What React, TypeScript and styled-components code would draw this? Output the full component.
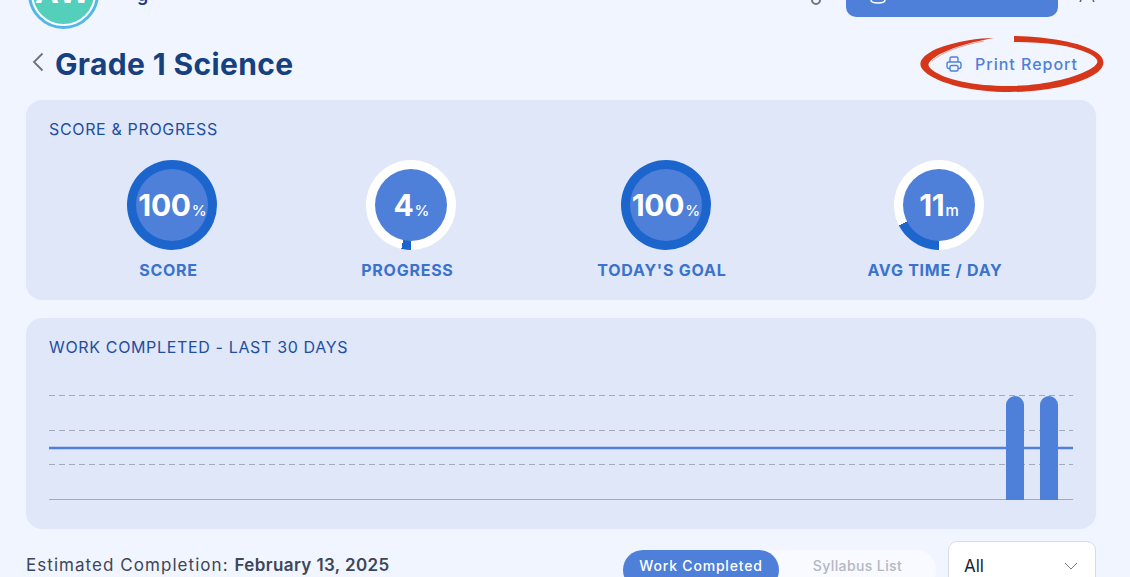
import React from 'react';
import styled, { createGlobalStyle } from 'styled-components';

const GlobalStyle = createGlobalStyle`
  html, body {
    margin: 0;
    padding: 0;
    height: 577px;
    overflow: hidden;
    background: #f1f5ff;
  }
  * {
    box-sizing: border-box;
  }
`;

const Page = styled.div`
  width: 1130px;
  height: 577px;
  overflow: hidden;
  padding: 0 34px 0 26px;
  background: #f1f5ff;
  font-family: Inter, "Open Sans", sans-serif;
`;

const TopBar = styled.div`
  height: 29px;
  display: flex;
  align-items: flex-end;
  overflow: hidden;
`;

const Avatar = styled.div`
  width: 71px;
  height: 71px;
  flex: none;
  margin-left: 2px;
  border-radius: 50%;
  border: 3px solid #53b6ea;
  padding: 2px;
  background: #fff;
`;

const AvatarFace = styled.div`
  width: 100%;
  height: 100%;
  padding-top: 12px;
  border-radius: 50%;
  background: #54cfbc;
  color: #fff;
  font-size: 32px;
  line-height: 34px;
  font-weight: 700;
  letter-spacing: 1px;
  text-align: center;
`;

const UserName = styled.span`
  align-self: flex-start;
  margin: -16px 0 0 38px;
  font-size: 18px;
  font-weight: 600;
  color: #17407f;
`;

const TopActions = styled.div`
  margin-left: auto;
  height: 17px;
  align-self: flex-start;
  display: flex;
  align-items: flex-start;
`;

const TopIcon = styled.svg`
  display: block;
  flex: none;
`;

const TopButton = styled.div`
  width: 212px;
  height: 17px;
  margin: 0 20px 0 24px;
  padding-left: 24px;
  background: #4f80d9;
  border-radius: 0 0 10px 10px;
`;

const TitleRow = styled.div`
  height: 71px;
  display: flex;
  align-items: center;
  justify-content: space-between;
  padding-bottom: 1px;
`;

const TitleGroup = styled.div`
  display: flex;
  align-items: center;
  gap: 11px;
`;

const BackIcon = styled.svg`
  display: block;
  margin: -4px 0 0 6px;
`;

const Title = styled.h1`
  margin: 0;
  font-size: 30px;
  font-weight: 700;
  letter-spacing: 0.35px;
  color: #17407f;
`;

const PrintWrap = styled.div`
  position: relative;
  display: flex;
  align-items: center;
  gap: 13px;
  margin-right: 18px;
  font-size: 16px;
  font-weight: 500;
  letter-spacing: 1px;
  color: #4f80d9;
`;

const RedCircle = styled.svg`
  position: absolute;
  left: -28px;
  top: -22px;
  pointer-events: none;
`;

const Card = styled.section<{ $height: number }>`
  height: ${props => props.$height}px;
  padding: 19px 23px 0;
  background: #dfe7f9;
  border-radius: 16px;
`;

const CardTitle = styled.h2`
  margin: 0;
  font-size: 16px;
  line-height: 20px;
  font-weight: 400;
  letter-spacing: 0.65px;
  color: #1f4e9e;
`;

const StatRow = styled.div`
  display: flex;
  justify-content: space-around;
  margin-top: 21px;
`;

const Stat = styled.div`
  display: flex;
  flex-direction: column;
  align-items: center;
`;

const Ring = styled.div<{ $percent: number }>`
  width: 90px;
  height: 90px;
  margin-left: 8px;
  padding: 9px;
  border-radius: 50%;
  background: conic-gradient(from 180deg, #1c65cd ${props => props.$percent}%, #fff 0);
`;

const RingCenter = styled.div`
  width: 100%;
  height: 100%;
  display: flex;
  align-items: baseline;
  justify-content: center;
  padding-top: 18px;
  border-radius: 50%;
  background: #4f80d9;
  color: #fff;
`;

const RingValue = styled.span`
  font-size: 30px;
  line-height: 36px;
  font-weight: 700;
  letter-spacing: -0.3px;
`;

const RingUnit = styled.span`
  margin-left: 1px;
  font-size: 15px;
  font-weight: 500;
`;

const StatLabel = styled.div`
  margin-top: 10px;
  font-size: 16px;
  line-height: 20px;
  font-weight: 700;
  letter-spacing: 0.75px;
  white-space: nowrap;
  color: #3a72cc;
`;

const ChartSvg = styled.svg`
  display: block;
  margin-top: 23px;
`;

const Spacer = styled.div`
  height: 18px;
`;

const BottomRow = styled.div`
  margin-top: 12px;
  display: flex;
  align-items: flex-start;
`;

const Estimate = styled.div`
  margin-top: 14px;
  font-size: 17px;
  line-height: 21px;
  letter-spacing: 1.05px;
  color: #3c4658;
  white-space: nowrap;

  strong {
    font-weight: 600;
    letter-spacing: 0.4px;
  }
`;

const Toggle = styled.div`
  margin: 9px 0 0 auto;
  width: 313px;
  height: 40px;
  display: flex;
  background: #f8faff;
  border-radius: 20px;
`;

const ToggleItem = styled.div<{ $active?: boolean }>`
  height: 100%;
  width: ${props => (props.$active ? '156px' : '157px')};
  padding-top: 7px;
  border-radius: 20px;
  text-align: center;
  font-size: 14px;
  line-height: 18px;
  font-weight: 500;
  letter-spacing: ${props => (props.$active ? '0.8px' : '0.4px')};
  background: ${props => (props.$active ? '#4f80d9' : 'transparent')};
  color: ${props => (props.$active ? '#fff' : '#b3b7c2')};
`;

const SelectBox = styled.div`
  margin-left: 12px;
  width: 148px;
  height: 50px;
  display: flex;
  justify-content: space-between;
  padding: 14px 17px 0 15px;
  background: #fff;
  border: 1px solid #d8dbe3;
  border-radius: 9px;
  font-size: 17px;
  line-height: 21px;
  color: #20242c;
`;

const Chevron = styled.svg`
  display: block;
  margin-top: 6px;
`;

type StatInfo = { value: string; unit: string; label: string; percent: number };

const stats: StatInfo[] = [
  { value: '100', unit: '%', label: 'SCORE', percent: 100 },
  { value: '4', unit: '%', label: 'PROGRESS', percent: 3.5 },
  { value: '100', unit: '%', label: "TODAY'S GOAL", percent: 100 },
  { value: '11', unit: 'm', label: 'AVG TIME / DAY', percent: 17.5 },
];

const dashY = [16, 51, 85];

export default function App() {
  return (
    <Page>
      <GlobalStyle />
      <TopBar>
        <Avatar>
          <AvatarFace>AW</AvatarFace>
        </Avatar>
        <UserName>g</UserName>
        <TopActions>
          <TopIcon width="12" height="5" viewBox="0 0 12 5">
            <path d="M2 0a4 4 0 0 0 8 0" fill="none" stroke="#6f7480" strokeWidth="2" />
          </TopIcon>
          <TopButton>
            <TopIcon width="16" height="4" viewBox="0 0 16 4">
              <path d="M1 0c0 1.800 3 3 7 3s7-1.200 7-3" fill="none" stroke="#fff" strokeWidth="1.500" />
            </TopIcon>
          </TopButton>
          <TopIcon width="18" height="2" viewBox="0 0 18 2">
            <path d="M2 2l1-2M15 0l1 2" fill="none" stroke="#5a5f6b" strokeWidth="1.500" />
          </TopIcon>
        </TopActions>
      </TopBar>

      <TitleRow>
        <TitleGroup>
          <BackIcon width="12" height="20" viewBox="0 0 12 20">
            <path d="M10.500 1.500 2 10l8.500 8.500" fill="none" stroke="#6c7280" strokeWidth="1.800" />
          </BackIcon>
          <Title>Grade 1 Science</Title>
        </TitleGroup>
        <PrintWrap>
          <svg width="16" height="16" viewBox="0 0 16 16" fill="none" stroke="#4f80d9" strokeWidth="1.400">
            <path d="M4 6V2.500A1.500 1.500 0 0 1 5.500 1h5A1.500 1.500 0 0 1 12 2.500V6" />
            <rect x="1" y="6" width="14" height="6.500" rx="2" />
            <rect x="4" y="9.500" width="8" height="5.500" rx="1.500" fill="#f1f5ff" />
          </svg>
          <span>Print Report</span>
          <RedCircle width="190" height="64" viewBox="0 0 190 64">
            <path
              d="M96 4C130 5 162 10 178 20C187 26 188 33 180 40C164 52 128 60 92 60C54 60 20 52 6 39C-2 31 4 24 18 17C38 9 62 6 76 6C58 9 38 14 22 22C12 28 8 32 12 36C24 48 58 54 90 54C124 54 158 46 174 36C182 31 181 27 172 22C154 13 126 10 96 10Z"
              fill="#d6361a"
            />
            <path d="M14 29C24 20 44 13 66 9" fill="none" stroke="#e58a78" strokeWidth="0.800" />
          </RedCircle>
        </PrintWrap>
      </TitleRow>

      <Card $height={200}>
        <CardTitle>SCORE &amp; PROGRESS</CardTitle>
        <StatRow>
          {stats.map(stat => (
            <Stat key={stat.label}>
              <Ring $percent={stat.percent}>
                <RingCenter>
                  <RingValue>{stat.value}</RingValue>
                  <RingUnit>{stat.unit}</RingUnit>
                </RingCenter>
              </Ring>
              <StatLabel>{stat.label}</StatLabel>
            </Stat>
          ))}
        </StatRow>
      </Card>

      <Spacer />

      <Card $height={211}>
        <CardTitle>WORK COMPLETED - LAST 30 DAYS</CardTitle>
        <ChartSvg width="1024" height="122" viewBox="0 0 1024 122">
          {dashY.map(y => (
            <line key={y} x1="0" x2="1024" y1={y - 0.5} y2={y - 0.5} stroke="#a3aab8" strokeDasharray="6 4" />
          ))}
          <line x1="0" x2="1024" y1="68" y2="68" stroke="#4f80d9" strokeWidth="2.500" />
          <line x1="0" x2="1024" y1="119.500" y2="119.500" stroke="#a3aab8" />
          <path d="M957 120V25a9 9 0 0 1 18 0v95Z" fill="#4f80d9" />
          <path d="M991 120V25a9 9 0 0 1 18 0v95Z" fill="#4f80d9" />
        </ChartSvg>
      </Card>

      <BottomRow>
        <Estimate>
          Estimated Completion: <strong>February 13, 2025</strong>
        </Estimate>
        <Toggle>
          <ToggleItem $active>Work Completed</ToggleItem>
          <ToggleItem>Syllabus List</ToggleItem>
        </Toggle>
        <SelectBox>
          All
          <Chevron width="14" height="8" viewBox="0 0 14 8">
            <path d="M1 1l6 6 6-6" fill="none" stroke="#777c88" strokeWidth="1" />
          </Chevron>
        </SelectBox>
      </BottomRow>
    </Page>
  );
}
